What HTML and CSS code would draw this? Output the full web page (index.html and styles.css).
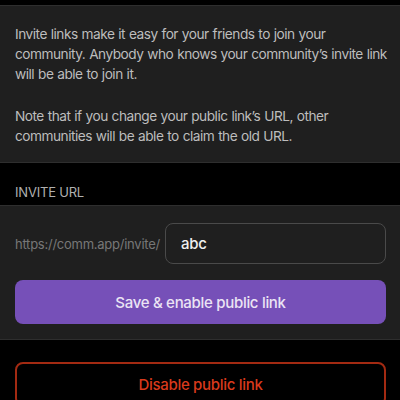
FILE: index.html
```html
<!DOCTYPE html>
<html>
<head>
<meta charset="utf-8">
<link rel="stylesheet" href="styles.css">
</head>
<body>
<div class="screen">
  <div class="top-gap"></div>
  <section class="panel description">
    <p class="desc-text"><span class="line">Invite links make it easy for your friends to join your</span> <span class="line">community. Anybody who knows your community’s invite link</span> <span class="line">will be able to join it.</span></p>
    <p class="desc-text"><span class="line">Note that if you change your public link’s URL, other</span> <span class="line">communities will be able to claim the old URL.</span></p>
  </section>
  <div class="section-header">INVITE URL</div>
  <section class="panel form">
    <div class="url-row">
      <span class="url-prefix">https://comm.app/invite/</span>
      <div class="url-input">abc</div>
    </div>
    <button class="btn btn-primary">Save &amp; enable public link</button>
  </section>
  <div class="danger-area">
    <button class="btn btn-danger">Disable public link</button>
  </div>
</div>
</body>
</html>
```
FILE: styles.css
```css
html, body {
  margin: 0;
  padding: 0;
  background: #000;
}
body {
  font-family: Inter, "Noto Sans", "Liberation Sans", sans-serif;
  width: 400px;
  height: 400px;
  overflow: hidden;
}
.screen {
  display: flex;
  flex-direction: column;
}
.top-gap {
  height: 5px;
}
.panel {
  background: #1f1f1f;
  border-top: 1px solid #2e2e2e;
  border-bottom: 1px solid #2e2e2e;
}
.description {
  padding: 18px 8px 16px 15px;
}
.desc-text {
  margin: 0;
  color: #bdbdbd;
  font-size: 13.7px;
  line-height: 20px;
  letter-spacing: -0.5px;
  word-spacing: 0.5px;
}
.line {
  display: block;
  white-space: nowrap;
}
.desc-text + .desc-text {
  margin-top: 22px;
}
.section-header {
  padding: 23px 15px 6px;
  color: #b0b0b0;
  font-size: 13px;
  line-height: 13px;
  letter-spacing: -0.2px;
}
.form {
  padding: 17px 14px 15px 15px;
  display: flex;
  flex-direction: column;
  gap: 16px;
}
.url-row {
  display: flex;
  align-items: center;
  gap: 5px;
}
.url-prefix {
  color: #777;
  font-size: 13px;
  letter-spacing: -0.25px;
}
.url-input {
  flex: 1;
  height: 39px;
  border: 1px solid #4a4a4a;
  border-radius: 8px;
  padding-left: 15px;
  display: flex;
  align-items: center;
  color: #f0f0f0;
  font-size: 15px;
  font-weight: 500;
  letter-spacing: -0.2px;
}
.btn {
  display: block;
  width: 100%;
  height: 44px;
  border-radius: 8px;
  font-family: inherit;
  font-size: 15px;
  font-weight: 500;
  letter-spacing: -0.3px;
  cursor: pointer;
}
.btn-primary {
  background: #7650b8;
  border: none;
  color: #ebe4f4;
}
.danger-area {
  padding: 22px 14px 0 15px;
}
.btn-danger {
  background: transparent;
  border: 2px solid #a32a12;
  color: #d93a1c;
}
```
